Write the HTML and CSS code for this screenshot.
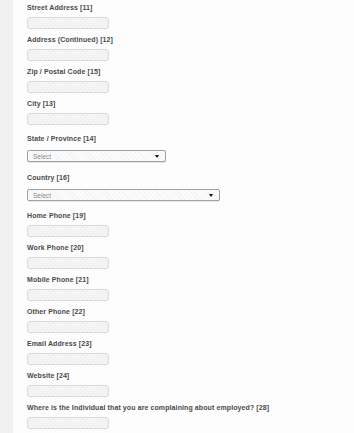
FILE: index.html
```html
<!DOCTYPE html>
<html>
<head>
<meta charset="utf-8">
<link rel="stylesheet" href="styles.css">
</head>
<body>
<div class="page">
  <aside class="strip"></aside>
  <form class="form">
    <div class="field"><label>Street Address [11]</label><div class="input"></div></div>
    <div class="field"><label>Address (Continued) [12]</label><div class="input"></div></div>
    <div class="field"><label>Zip / Postal Code [15]</label><div class="input"></div></div>
    <div class="field"><label>City [13]</label><div class="input"></div></div>
    <div class="field sel"><label>State / Province [14]</label><div class="select state"><span>Select</span><i class="arrow"></i></div></div>
    <div class="field sel last-sel"><label>Country [16]</label><div class="select country"><span>Select</span><i class="arrow"></i></div></div>
    <div class="field"><label>Home Phone [19]</label><div class="input"></div></div>
    <div class="field"><label>Work Phone [20]</label><div class="input"></div></div>
    <div class="field"><label>Mobile Phone [21]</label><div class="input"></div></div>
    <div class="field"><label>Other Phone [22]</label><div class="input"></div></div>
    <div class="field"><label>Email Address [23]</label><div class="input"></div></div>
    <div class="field"><label>Website [24]</label><div class="input"></div></div>
    <div class="field"><label>Where is the Individual that you are complaining about employed? [28]</label><div class="input"></div></div>
  </form>
</div>
</body>
</html>
```
FILE: styles.css
```css
html, body {
  margin: 0;
  padding: 0;
  background: #fdfdfd;
}
.page {
  display: flex;
  height: 433px;
  overflow: hidden;
}
.strip {
  width: 13px;
  flex: none;
  background: #f1f1f1;
}
.form {
  padding: 4px 0 0 14px;
  display: block;
  margin: 0;
}
.field {
  display: block;
  margin: 0 0 7px 0;
}
.field label {
  display: block;
  height: 8px;
  font-family: "Liberation Sans", Arial, sans-serif;
  font-weight: bold;
  font-size: 7px;
  letter-spacing: 0.1px;
  line-height: 8px;
  color: #4a4a4a;
  margin-bottom: 5px;
  white-space: nowrap;
}
.input {
  width: 80px;
  height: 10px;
  border: 1px solid #dadada;
  border-radius: 3px;
  background-color: #f8f8f8;
  background-image: repeating-linear-gradient(45deg, #f0f0f0 0 1px, transparent 1px 3px), repeating-linear-gradient(-45deg, #f0f0f0 0 1px, transparent 1px 3px);
}
.sel {
  padding-top: 3px;
  margin-bottom: 9px;
}
.last-sel { margin-bottom: 11px; }
.sel label { margin-bottom: 7px; }
.select {
  height: 10px;
  border: 1px solid #a0a0a0;
  border-radius: 2px;
  background-color: #fbfcfd;
  background-image: repeating-linear-gradient(45deg, #f0f3f6 0 1px, transparent 1px 3px);
  display: flex;
  align-items: center;
  justify-content: space-between;
  padding: 0 6px 0 5px;
  box-shadow: 0 1px 0 #e6e6e6;
}
.state { width: 126px; }
.country { width: 180px; }
.select span {
  font-family: "Liberation Sans", Arial, sans-serif;
  font-size: 6.5px;
  color: #888;
}
.arrow {
  width: 0;
  height: 0;
  border-left: 2px solid transparent;
  border-right: 2px solid transparent;
  border-top: 3px solid #111;
}
```
